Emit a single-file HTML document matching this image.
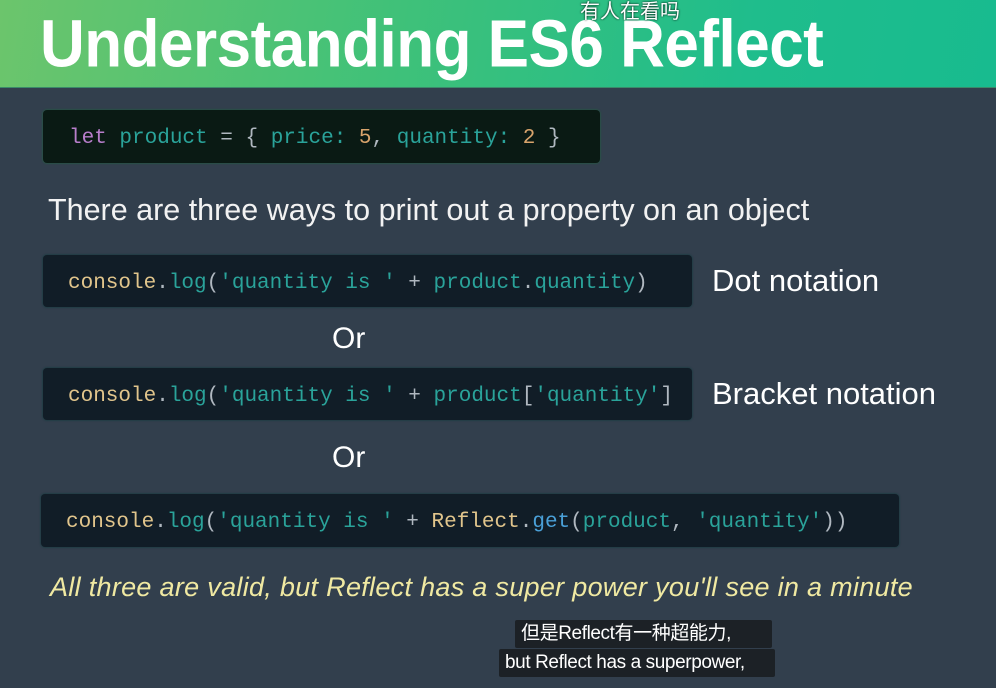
<!DOCTYPE html>
<html><head><meta charset="utf-8"><style>
body{margin:0;width:996px;height:688px;overflow:hidden;background:#323f4d;position:relative;font-family:"Liberation Sans","Noto Sans CJK SC",sans-serif}
.hdr{position:absolute;left:0;top:0;width:996px;height:87px;background:linear-gradient(100deg,#6cc56c 0%,#3fc179 40%,#1fbd8c 75%,#18bb8f 100%);border-bottom:1px solid #3a8a6a}
.title{position:absolute;left:40px;top:6px;font-size:62px;line-height:72px;font-weight:bold;color:#fff;letter-spacing:-0.5px;white-space:nowrap;transform:scaleY(1.08);transform-origin:top left}
.box{position:absolute;background:#111d27;border-radius:4px;box-shadow:0 0 2px #0a3a3a;font-family:"Liberation Mono",monospace;font-size:21px;color:#ccc;white-space:pre;line-height:58px}
.y{color:#e1c58c}.t{color:#2aa39a}.g{color:#b0b8c0}.p{color:#b87ecb}.n{color:#d9a46c}.b{color:#4aa0d8}
.txt{position:absolute;color:#fff;white-space:nowrap}
.sub{position:absolute;background:rgba(25,28,32,.85);color:#fff;font-size:19px;letter-spacing:-0.4px;padding:0 6px;line-height:28px;border-radius:2px;white-space:nowrap}
</style></head><body>
<div class="hdr"></div>
<div class="title">Understanding ES6 Reflect</div>
<div class="txt" style="left:580px;top:0;font-size:20px;line-height:24px;text-shadow:0 0 2px #000">有人在看吗</div>
<div class="box" style="left:43px;top:110px;width:531px;height:53px;padding-left:26px;background:#0a1a14;box-shadow:0 0 2px #1e6a3e"><span class="p">let</span> <span class="t">product</span> <span class="g">=</span> <span class="g">{</span> <span class="t">price:</span> <span class="n">5</span><span class="g">,</span> <span class="t">quantity:</span> <span class="n">2</span> <span class="g">}</span></div>
<div class="txt" style="left:48px;top:191px;font-size:30.5px;line-height:38px;color:#f2f2f2">There are three ways to print out a property on an object</div>
<div class="box" style="left:43px;top:255px;width:624px;height:52px;padding-left:25px"><span class="y">console</span><span class="g">.</span><span class="t">log</span><span class="g">(</span><span class="t">'quantity is '</span> <span class="g">+</span> <span class="t">product</span><span class="g">.</span><span class="t">quantity</span><span class="g">)</span></div>
<div class="txt" style="left:712px;top:262px;font-size:31px;line-height:38px">Dot notation</div>
<div class="txt" style="left:332px;top:320px;font-size:30px;line-height:38px">Or</div>
<div class="box" style="left:43px;top:368px;width:624px;height:52px;padding-left:25px"><span class="y">console</span><span class="g">.</span><span class="t">log</span><span class="g">(</span><span class="t">'quantity is '</span> <span class="g">+</span> <span class="t">product</span><span class="g">[</span><span class="t">'quantity'</span><span class="g">]</span></div>
<div class="txt" style="left:712px;top:375px;font-size:31px;line-height:38px">Bracket notation</div>
<div class="txt" style="left:332px;top:439px;font-size:30px;line-height:38px">Or</div>
<div class="box" style="left:41px;top:494px;width:833px;height:53px;padding-left:25px;line-height:58px"><span class="y">console</span><span class="g">.</span><span class="t">log</span><span class="g">(</span><span class="t">'quantity is '</span> <span class="g">+</span> <span class="y">Reflect</span><span class="g">.</span><span class="b">get</span><span class="g">(</span><span class="t">product</span><span class="g">,</span> <span class="t">'quantity'</span><span class="g">))</span></div>
<div class="txt" style="left:50px;top:569px;font-size:27px;line-height:36px;font-style:italic;color:#f0e9a2;letter-spacing:0.3px">All three are valid, but Reflect has a super power you'll see in a minute</div>
<div class="sub" style="left:515px;top:620px;width:245px">但是Reflect有一种超能力,</div>
<div class="sub" style="left:499px;top:649px;width:264px">but Reflect has a superpower,</div>
</body></html>
